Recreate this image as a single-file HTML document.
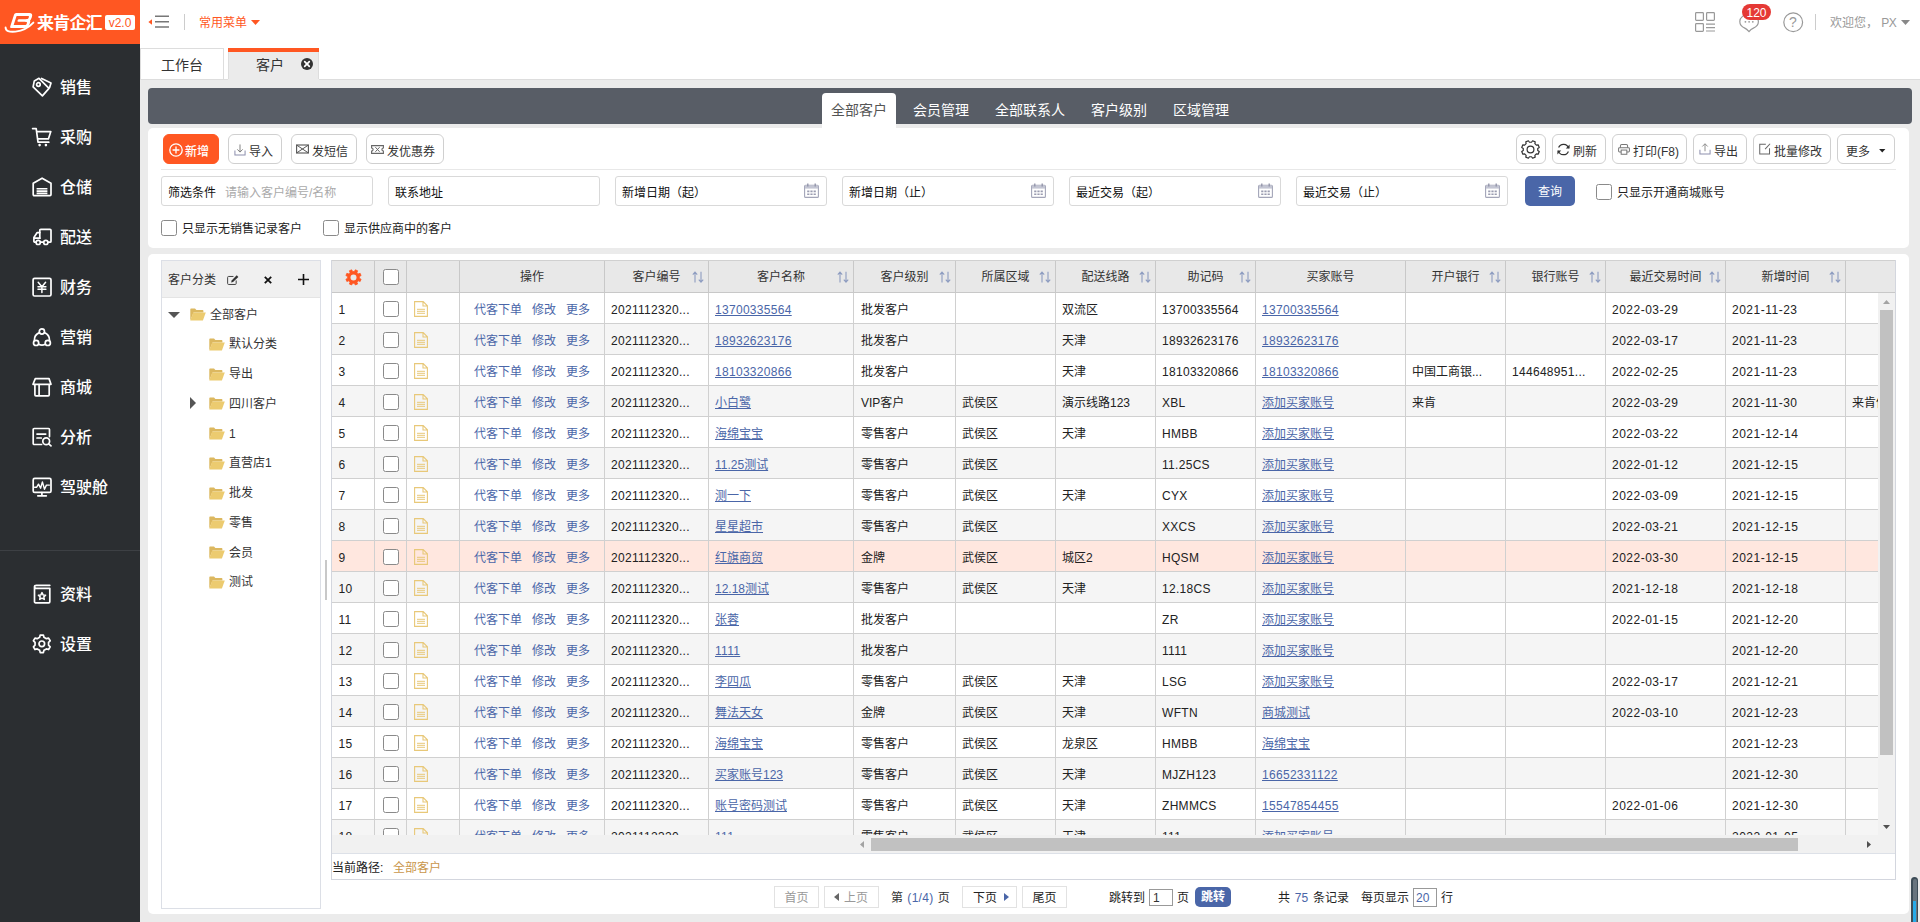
<!DOCTYPE html>
<html lang="zh-CN">
<head>
<meta charset="utf-8">
<title>客户</title>
<style>
*{box-sizing:border-box;margin:0;padding:0}
html,body{width:1920px;height:922px;overflow:hidden}
body{background:#ebebeb;font-family:"Liberation Sans","Noto Sans CJK SC",sans-serif;font-size:12px;color:#333;position:relative;line-height:1}
.abs{position:absolute}
svg{display:block;overflow:visible}
/* sidebar */
#side{position:absolute;left:0;top:0;width:140px;height:922px;background:#2b2e31}
#logo{position:absolute;left:0;top:0;width:140px;height:44px;background:#ff5722}
.mi{position:absolute;left:0;width:140px;height:50px;color:#fff;font-size:16px;font-weight:500}
.mi svg{position:absolute;left:32px;top:15px}
.mi span{position:absolute;left:60px;top:16px;line-height:20px;white-space:nowrap}
#sdiv{position:absolute;left:0;top:550px;width:140px;height:1px;background:#3d4044}
/* top */
#top{position:absolute;left:140px;top:0;width:1780px;height:80px;background:#fff}
#tabline{position:absolute;left:140px;top:79px;width:1780px;height:1px;background:#ddd}
.tab{position:absolute;font-size:14px;color:#333;line-height:20px;white-space:nowrap}
/* dark bar */
#dark{position:absolute;left:148px;top:88px;width:1764px;height:36px;background:#585d66;border-radius:4px}
.st{position:absolute;top:102px;font-size:14px;color:#fff;line-height:16px;white-space:nowrap}
/* panels */
.panel{position:absolute;background:#fff;border-radius:5px}
.btn{position:absolute;top:134px;height:30px;border:1px solid #d0d0d0;border-radius:6px;background:#fff;font-size:12px;color:#333;white-space:nowrap}
.btn span{position:absolute;top:10px;line-height:14px}
.btn svg{position:absolute}
.inp{position:absolute;top:176px;height:30px;border:1px solid #d9d9d9;border-radius:3px;background:#fff}
.inp span{position:absolute;left:6px;top:9px;line-height:14px;white-space:nowrap;color:#111}
.inp svg{position:absolute;right:7px;top:6px}
.cb{position:absolute;width:16px;height:16px;border:1px solid #8a8a8a;border-radius:2.5px;background:#fff}
.lbl{position:absolute;line-height:14px;white-space:nowrap;color:#222}
/* tree */
#tree{position:absolute;left:161px;top:260px;width:160px;height:649px;border:1px solid #dcdfe6;background:#fff}
#treeh{position:absolute;left:0;top:0;width:158px;height:37px;background:#f0f0f0;border-bottom:1px solid #e4e4e4}
.tn{position:absolute;line-height:14px;white-space:nowrap;color:#333}
.fd{position:absolute}
/* grid */
#grid{position:absolute;left:331px;top:260px;width:1565px;height:620px;border:1px solid #d3d6de;border-top:none;background:#fff;overflow:hidden}
#gh{position:absolute;left:0;top:0;width:1563px;height:33px;background:#e8e8e8;border-top:1px solid #d0d0d0;border-bottom:1px solid #c8c8c8}
.hc{position:absolute;top:0;height:31px;border-right:1px solid #c8c8c8;text-align:center;line-height:33px;color:#333;white-space:nowrap}
.hc i{position:absolute;right:5px;top:10px;width:12px;height:12px}
#gb{position:absolute;left:0;top:33px;width:1546px;height:542px;overflow:hidden}
.r{position:absolute;left:0;width:1563px;height:31px;border-bottom:1px solid #d0d0d0;background:#fff}
.r.e{background:#f5f5f5}
.r.s{background:#ffe7df}
.c{position:absolute;top:0;height:30px;border-right:1px solid #d0d0d0;line-height:35px;padding-left:7px;white-space:nowrap;overflow:hidden;color:#222}
.c a,.lk{color:#4a66a8;text-decoration:underline}
.op{color:#4a66a8}
.n{letter-spacing:.3px}
.d{letter-spacing:.5px}
.pg{position:absolute;top:886px;height:22px;border:1px solid #e2e2e2;background:#fff;line-height:22px;text-align:center;white-space:nowrap}
</style>
</head>
<body>
<div id="side">
<div id="logo">
<svg class="abs" style="left:4px;top:12px" width="32" height="22" viewBox="0 0 32 22"><g fill="none" stroke="#fff" stroke-linecap="round" stroke-linejoin="round"><g transform="skewX(-18)"><path d="M12.4,2.5 H25.6 a2.4,2.4 0 0 1 2.4,2.4 V6.1 a2.4,2.4 0 0 1 -2.4,2.4 a2.4,2.4 0 0 1 2.4,2.4 V12.1 a2.4,2.4 0 0 1 -2.4,2.4 H12.4 Z" stroke-width="3"/><path d="M17.5,8.5 H25.4" stroke-width="2.4"/></g><path d="M1.6,15.4 Q1.6,20.6 11.5,19.6 Q22,18.4 29.4,10.6" stroke-width="1.9"/></g></svg>
<span class="abs" style="left:37px;top:13px;font-size:17px;line-height:22px;font-weight:700;color:#fff;letter-spacing:-.8px;white-space:nowrap">来肯企汇</span>
<span class="abs" style="left:105px;top:15px;width:30px;height:15px;background:#fff;border-radius:2px;color:#ff5722;font-size:12px;line-height:16px;text-align:center">v2.0</span>
</div>
<div class="mi" style="top:62px"><svg width="20" height="20" viewBox="0 0 20 20"><g fill="none" stroke="#fff" stroke-width="1.7" stroke-linejoin="round" stroke-linecap="round"><path d="M2.3,3.9 L7,1.3 L17,11.4 L10.4,18.9 L1.1,9.9 Z"/><path d="M9.6,1.4 L19,6 L17.6,10.6"/><circle cx="6.4" cy="7.5" r="1.8"/></g></svg><span>销售</span></div>
<div class="mi" style="top:112px"><svg width="20" height="20" viewBox="0 0 20 20"><g fill="none" stroke="#fff" stroke-width="1.7" stroke-linejoin="round" stroke-linecap="round"><path d="M0.6,1.6 H4.2 L6,15.2 H16.8"/><path d="M5,4.6 H18.8 L16.4,11.9 H5.9"/></g><circle cx="7.6" cy="18.1" r="1.3" fill="#fff"/><circle cx="13.9" cy="18.1" r="1.3" fill="#fff"/></svg><span>采购</span></div>
<div class="mi" style="top:162px"><svg width="20" height="20" viewBox="0 0 20 20"><g fill="none" stroke="#fff" stroke-width="1.7" stroke-linejoin="round" stroke-linecap="round"><path d="M1.2,6.3 L10.1,1.2 L19,6.3 V17.6 a1,1 0 0 1 -1,1 H2.2 a1,1 0 0 1 -1,-1 Z"/></g><path d="M4.6,11h10.8v1.6H4.6z M4.6,13.3h10.8v1.6H4.6z M4.6,15.6h10.8v1.6H4.6z" fill="#fff"/></svg><span>仓储</span></div>
<div class="mi" style="top:212px"><svg width="20" height="20" viewBox="0 0 20 20"><g fill="none" stroke="#fff" stroke-width="1.7" stroke-linejoin="round" stroke-linecap="round"><path d="M7.8,11.2 V3.3 a1,1 0 0 1 1,-1 H18 a1,1 0 0 1 1,1 V14.2 a1,1 0 0 1 -1,1 H16.2"/><path d="M7.8,11.2 H1.9 M11.4,15.2 H8.6 M3.8,15.2 H2.9 a1,1 0 0 1 -1,-1 V10.4 L5.2,5.6 H7.8"/><circle cx="6.2" cy="15.4" r="2.1"/><circle cx="13.8" cy="15.4" r="2.1"/></g></svg><span>配送</span></div>
<div class="mi" style="top:262px"><svg width="20" height="20" viewBox="0 0 20 20"><g fill="none" stroke="#fff" stroke-width="1.7" stroke-linejoin="round" stroke-linecap="round"><rect x="1.1" y="1.3" width="17.9" height="17.7" rx="1.5"/><path d="M6.2,5.3 L9.9,9.8 L13.6,5.3 M6,9.8 H13.9 M6,12.2 H13.9 M9.9,9.8 V15.6" stroke-width="1.5"/></g></svg><span>财务</span></div>
<div class="mi" style="top:312px"><svg width="20" height="20" viewBox="0 0 20 20"><g fill="none" stroke="#fff" stroke-width="1.7" stroke-linejoin="round" stroke-linecap="round"><circle cx="9.9" cy="4.5" r="2.6"/><circle cx="4.1" cy="15.9" r="2.6"/><circle cx="15.8" cy="15.9" r="2.6"/><path d="M7.4,5.6 A8,8 0 0 0 2.4,13.3 M12.4,5.6 A8,8 0 0 1 17.5,13.3 M6.6,17.3 A8,8 0 0 0 13.3,17.3"/></g></svg><span>营销</span></div>
<div class="mi" style="top:362px"><svg width="20" height="20" viewBox="0 0 20 20"><g fill="none" stroke="#fff" stroke-width="1.7" stroke-linejoin="round" stroke-linecap="round"><path d="M3.3,1.6 H17 L19,7.3 H1 Z"/><path d="M2.9,7.6 V17.8 a1,1 0 0 0 1,1 H16.2 a1,1 0 0 0 1,-1 V7.6 M7.1,7.6 V18.6"/></g></svg><span>商城</span></div>
<div class="mi" style="top:412px"><svg width="20" height="20" viewBox="0 0 20 20"><g fill="none" stroke="#fff" stroke-width="1.7" stroke-linejoin="round" stroke-linecap="round"><path d="M9.6,17.5 H2.2 a1,1 0 0 1 -1,-1 V2.5 a1,1 0 0 1 1,-1 H16.5 a1,1 0 0 1 1,1 V9.6"/><path d="M5,7.1 H13.7 M5,11 H9.3"/><circle cx="14.2" cy="14.3" r="3.4"/><path d="M16.7,16.8 L19,18.9"/></g></svg><span>分析</span></div>
<div class="mi" style="top:462px"><svg width="20" height="20" viewBox="0 0 20 20"><g fill="none" stroke="#fff" stroke-width="1.7" stroke-linejoin="round" stroke-linecap="round"><rect x="1.2" y="1.4" width="17.8" height="14" rx="1.5"/><path d="M9.9,15.6 V18.6 M5.8,18.8 H14.3"/><path d="M2.6,10.2 H4.7 L6.5,7.2 L8.6,11.2 L10.4,4.9 L12.5,12.2 L14.4,8.1 H17.4" stroke-width="1.4"/></g></svg><span>驾驶舱</span></div>
<div class="mi" style="top:569px"><svg width="20" height="20" viewBox="0 0 20 20"><g fill="none" stroke="#fff" stroke-width="1.7" stroke-linejoin="round" stroke-linecap="round"><path d="M17.8,1.3 H4.4 a1.9,1.5 0 0 0 0,3 H17.8 V17.8 a1,1 0 0 1 -1,1 H3.5 a1,1 0 0 1 -1,-1 V2.8"/><path d="M10,8.6 L11.1,10.9 L13.6,11.2 L11.8,12.9 L12.3,15.4 L10,14.2 L7.7,15.4 L8.2,12.9 L6.4,11.2 L8.9,10.9 Z" stroke-width="1.5"/></g></svg><span>资料</span></div>
<div class="mi" style="top:619px"><svg width="20" height="20" viewBox="0 0 20 20"><g fill="none" stroke="#fff" stroke-width="1.7" stroke-linejoin="round" stroke-linecap="round"><path d="M11.93,16.36 L11.38,18.56 L8.22,18.56 L7.67,16.36 L5.18,14.93 L3.00,15.54 L1.43,12.81 L3.05,11.23 L3.05,8.37 L1.43,6.79 L3.00,4.06 L5.18,4.67 L7.67,3.24 L8.22,1.04 L11.38,1.04 L11.93,3.24 L14.42,4.67 L16.60,4.06 L18.17,6.79 L16.55,8.37 L16.55,11.23 L18.17,12.81 L16.60,15.54 L14.42,14.93Z"/><circle cx="9.8" cy="9.8" r="2.8"/></g></svg><span>设置</span></div>
<div id="sdiv"></div>
</div>
<div id="top">
<!-- collapse icon -->
<svg class="abs" style="left:8px;top:14px" width="22" height="16" viewBox="0 0 22 16"><path d="M0.4,8 L4,5.2 V10.8 Z" fill="#ff5722"/><path d="M7,2.3 H21 M7,7.7 H21 M7,13 H21" stroke="#777" stroke-width="1.6" fill="none"/></svg>
<div class="abs" style="left:44px;top:14px;width:1px;height:16px;background:#ccc"></div>
<span class="abs" style="left:59px;top:16px;line-height:14px;color:#ff5722;white-space:nowrap">常用菜单</span>
<svg class="abs" style="left:111px;top:20px" width="9" height="5" viewBox="0 0 9 5"><path d="M0,0 H9 L4.5,5 Z" fill="#ff5722"/></svg>
<!-- right icons -->
<svg class="abs" style="left:1555px;top:12px" width="21" height="21" viewBox="0 0 21 21"><g fill="none" stroke="#999" stroke-width="1.2"><rect x="0.6" y="0.6" width="7.8" height="7.8" rx="0.8"/><rect x="11.6" y="0.6" width="7.8" height="7.8" rx="0.8"/><rect x="0.6" y="11.6" width="7.8" height="7.8" rx="0.8"/><path d="M11,12.2 H20 M11,15.6 H20 M11,19 H20"/></g></svg>
<svg class="abs" style="left:1599px;top:13px" width="21" height="20" viewBox="0 0 21 20"><path d="M10.2,1.2 C4.8,1.2 0.8,4.6 0.8,8.6 C0.8,11.4 2.8,13.9 5.8,15.1 C7.2,15.7 8.6,17 10,18.6 C11.2,17 12.6,15.8 14.4,15.1 C17.4,13.9 19.4,11.4 19.4,8.6 C19.4,4.6 15.4,1.2 10.2,1.2 Z" fill="none" stroke="#999" stroke-width="1.2"/><circle cx="6.4" cy="8.8" r="0.9" fill="#999"/><circle cx="10.1" cy="8.8" r="0.9" fill="#999"/><circle cx="13.8" cy="8.8" r="0.9" fill="#999"/></svg>
<div class="abs" style="left:1602px;top:4px;width:29px;height:16px;border-radius:8px;background:#e53935;color:#fff;font-size:12px;line-height:18px;text-align:center">120</div>
<svg class="abs" style="left:1643px;top:12px" width="21" height="21" viewBox="0 0 21 21"><circle cx="10.2" cy="10.2" r="9.4" fill="none" stroke="#999" stroke-width="1.2"/></svg>
<span class="abs" style="left:1649px;top:14px;font-size:14px;line-height:16px;color:#999">?</span>
<div class="abs" style="left:1675px;top:14px;width:1px;height:16px;background:#ccc"></div>
<span class="abs" style="left:1690px;top:16px;line-height:14px;color:#999;white-space:nowrap">欢迎您，&nbsp;<span style="letter-spacing:-.7px">PX</span></span>
<svg class="abs" style="left:1761px;top:20px" width="9" height="5" viewBox="0 0 9 5"><path d="M0,0 H9 L4.5,5 Z" fill="#888"/></svg>
<!-- tabs -->
<div class="abs" style="left:0;top:48px;width:84px;height:31px;border:1px solid #ddd;border-bottom:none;background:#fff"></div>
<span class="tab" style="left:21px;top:55px">工作台</span>
<div class="abs" style="left:88px;top:48px;width:91px;height:32px;background:#ebebeb;border-right:1px solid #ddd;border-left:1px solid #ddd"></div>
<div class="abs" style="left:88px;top:48px;width:91px;height:4px;background:#ff5722"></div>
<span class="tab" style="left:116px;top:55px">客户</span>
<svg class="abs" style="left:161px;top:58px" width="12" height="12" viewBox="0 0 12 12"><circle cx="6" cy="6" r="6" fill="#333"/><path d="M3.7,3.7 L8.3,8.3 M8.3,3.7 L3.7,8.3" stroke="#fff" stroke-width="1.7" stroke-linecap="round"/></svg>
</div>
<div id="tabline"></div>
<div class="abs" style="left:228px;top:79px;width:91px;height:1px;background:#ebebeb"></div>
<!-- dark bar -->
<div id="dark"></div>
<div class="abs" style="left:822px;top:93px;width:74px;height:35px;background:#fff;border-radius:4px 4px 0 0"></div>
<span class="st" style="left:831px;color:#555">全部客户</span>
<span class="st" style="left:913px">会员管理</span>
<span class="st" style="left:995px">全部联系人</span>
<span class="st" style="left:1091px">客户级别</span>
<span class="st" style="left:1173px">区域管理</span>
<div class="panel" style="left:148px;top:128px;width:1761px;height:120px"></div>
<div class="btn" style="left:163px;width:56px;background:#ff5722;border-color:#ff5722"><svg style="left:4.5px;top:7.5px" width="14" height="14" viewBox="0 0 14 14"><circle cx="7" cy="7" r="6.2" fill="none" stroke="#fff" stroke-width="1.3"/><path d="M7,3.6 V10.4 M3.6,7 H10.4" stroke="#fff" stroke-width="1.3"/></svg><span style="left:21px;color:#fff;font-weight:500">新增</span></div>
<div class="btn" style="left:228px;width:54px"><svg style="left:4.5px;top:9px" width="12" height="12" viewBox="0 0 13 13"><path d="M1,7 V11.8 H12 V7" fill="none" stroke="#8d90ad" stroke-width="1.1"/><path d="M6.5,0.5 V8.6 M3.6,5.8 L6.5,8.8 L9.4,5.8" fill="none" stroke="#777" stroke-width="1"/></svg><span style="left:20px">导入</span></div>
<div class="btn" style="left:291px;width:66px"><svg style="left:4px;top:9px" width="13" height="10" viewBox="0 0 13 10"><rect x="0.6" y="1" width="11.8" height="8" fill="none" stroke="#555" stroke-width="1.1"/><path d="M0.8,1.2 L12.2,8.8 M12.2,1.2 L0.8,8.8" stroke="#555" stroke-width="1"/></svg><span style="left:20px">发短信</span></div>
<div class="btn" style="left:366px;width:78px"><svg style="left:4px;top:9.5px" width="13" height="9" viewBox="0 0 13 9"><path d="M0.6,0.6 H12.4 V3 a1.5,1.5 0 0 0 0,3 V8.4 H0.6 V6 a1.5,1.5 0 0 0 0,-3 Z" fill="none" stroke="#666" stroke-width="1.1"/><path d="M4.4,2.2 L8.6,6.8 M8.6,2.2 L4.4,6.8" stroke="#666" stroke-width="1"/></svg><span style="left:20px">发优惠券</span></div>
<div class="btn" style="left:1516px;width:30px"><svg style="left:4.3px;top:4.8px" width="19" height="19" viewBox="0 0 19 19"><path d="M16.73,10.53 L18.25,11.60 L17.17,14.20 L15.34,13.88 L13.88,15.34 L14.20,17.17 L11.60,18.25 L10.53,16.73 L8.47,16.73 L7.40,18.25 L4.80,17.17 L5.12,15.34 L3.66,13.88 L1.83,14.20 L0.75,11.60 L2.27,10.53 L2.27,8.47 L0.75,7.40 L1.83,4.80 L3.66,5.12 L5.12,3.66 L4.80,1.83 L7.40,0.75 L8.47,2.27 L10.53,2.27 L11.60,0.75 L14.20,1.83 L13.88,3.66 L15.34,5.12 L17.17,4.80 L18.25,7.40 L16.73,8.47Z" fill="none" stroke="#333" stroke-width="1.2" stroke-linejoin="round"/><circle cx="9.5" cy="9.5" r="3.4" fill="none" stroke="#333" stroke-width="1.2"/></svg></div>
<div class="btn" style="left:1552px;width:54px"><svg style="left:4px;top:8px" width="13" height="13" viewBox="0 0 13 13"><path d="M11.6,5.2 A5.3,5.3 0 0 0 1.6,4.6 M1.4,7.8 A5.3,5.3 0 0 0 11.4,8.4" fill="none" stroke="#333" stroke-width="1.2"/><path d="M12.6,1.6 V5.6 H8.8 Z M0.4,11.4 V7.4 H4.2 Z" fill="#333"/></svg><span style="left:20px">刷新</span></div>
<div class="btn" style="left:1612px;width:75px"><svg style="left:4.5px;top:9px" width="12" height="11" viewBox="0 0 13 12"><g fill="none" stroke="#777" stroke-width="1.1"><path d="M2.6,4 V2 a1.4,1.4 0 0 1 1.4,-1.4 H9 a1.4,1.4 0 0 1 1.4,1.4 V4"/><rect x="0.6" y="4" width="11.8" height="4.6" rx="1"/><rect x="3.4" y="6.6" width="6.2" height="4.6" fill="#fff"/></g></svg><span style="left:20px">打印(F8)</span></div>
<div class="btn" style="left:1693px;width:54px"><svg style="left:4.5px;top:8px" width="12" height="12" viewBox="0 0 13 13"><path d="M1,7.4 V12 H12 V7.4" fill="none" stroke="#8d90ad" stroke-width="1.1"/><path d="M6.5,9 V1 M3.6,3.8 L6.5,0.8 L9.4,3.8" fill="none" stroke="#888" stroke-width="1"/></svg><span style="left:20px">导出</span></div>
<div class="btn" style="left:1753px;width:78px"><svg style="left:4.5px;top:8px" width="12" height="12" viewBox="0 0 13 13"><path d="M7.4,1.4 H0.8 V12 H11.4 V5.6" fill="none" stroke="#666" stroke-width="1.1"/><path d="M12,0.8 L6.6,6.6" stroke="#666" stroke-width="1.1"/></svg><span style="left:20px">批量修改</span></div>
<div class="btn" style="left:1837px;width:58px"><span style="left:8px">更多</span><svg style="left:41px;top:13.5px" width="6.5" height="3.6" viewBox="0 0 7 4"><path d="M0,0 H7 L3.5,4 Z" fill="#222"/></svg></div>
<div class="abs" style="left:161px;top:169px;width:1735px;height:1px;background:#e8e8e8"></div>
<div class="inp" style="left:161px;width:212px"><span>筛选条件</span><span style="left:63px;color:#aaa">请输入客户编号/名称</span></div>
<div class="inp" style="left:388px;width:212px"><span>联系地址</span></div>
<div class="inp" style="left:615px;width:212px"><span>新增日期（起）</span><svg width="15" height="15" viewBox="0 0 15 15"><rect x="0.6" y="2.2" width="13.8" height="12.2" rx="1" fill="#fff" stroke="#a3a5b8" stroke-width="1.1"/><rect x="1" y="2.4" width="13" height="3.2" fill="#c3c5d3"/><path d="M3.8,0.6 V3.4 M11.2,0.6 V3.4" stroke="#8f91a6" stroke-width="1.3"/><path d="M3.2,8.4 H5.4 M6.4,8.4 H8.6 M9.6,8.4 H11.8 M3.2,11.2 H5.4 M6.4,11.2 H8.6 M9.6,11.2 H11.8" stroke="#9a9cb0" stroke-width="1.6"/></svg></div>
<div class="inp" style="left:842px;width:212px"><span>新增日期（止）</span><svg width="15" height="15" viewBox="0 0 15 15"><rect x="0.6" y="2.2" width="13.8" height="12.2" rx="1" fill="#fff" stroke="#a3a5b8" stroke-width="1.1"/><rect x="1" y="2.4" width="13" height="3.2" fill="#c3c5d3"/><path d="M3.8,0.6 V3.4 M11.2,0.6 V3.4" stroke="#8f91a6" stroke-width="1.3"/><path d="M3.2,8.4 H5.4 M6.4,8.4 H8.6 M9.6,8.4 H11.8 M3.2,11.2 H5.4 M6.4,11.2 H8.6 M9.6,11.2 H11.8" stroke="#9a9cb0" stroke-width="1.6"/></svg></div>
<div class="inp" style="left:1069px;width:212px"><span>最近交易（起）</span><svg width="15" height="15" viewBox="0 0 15 15"><rect x="0.6" y="2.2" width="13.8" height="12.2" rx="1" fill="#fff" stroke="#a3a5b8" stroke-width="1.1"/><rect x="1" y="2.4" width="13" height="3.2" fill="#c3c5d3"/><path d="M3.8,0.6 V3.4 M11.2,0.6 V3.4" stroke="#8f91a6" stroke-width="1.3"/><path d="M3.2,8.4 H5.4 M6.4,8.4 H8.6 M9.6,8.4 H11.8 M3.2,11.2 H5.4 M6.4,11.2 H8.6 M9.6,11.2 H11.8" stroke="#9a9cb0" stroke-width="1.6"/></svg></div>
<div class="inp" style="left:1296px;width:212px"><span>最近交易（止）</span><svg width="15" height="15" viewBox="0 0 15 15"><rect x="0.6" y="2.2" width="13.8" height="12.2" rx="1" fill="#fff" stroke="#a3a5b8" stroke-width="1.1"/><rect x="1" y="2.4" width="13" height="3.2" fill="#c3c5d3"/><path d="M3.8,0.6 V3.4 M11.2,0.6 V3.4" stroke="#8f91a6" stroke-width="1.3"/><path d="M3.2,8.4 H5.4 M6.4,8.4 H8.6 M9.6,8.4 H11.8 M3.2,11.2 H5.4 M6.4,11.2 H8.6 M9.6,11.2 H11.8" stroke="#9a9cb0" stroke-width="1.6"/></svg></div>
<div class="abs" style="left:1525px;top:176px;width:50px;height:30px;border-radius:5px;background:#4a66a8;color:#fff;text-align:center;line-height:32px">查询</div>
<div class="cb" style="left:1596px;top:184px"></div><span class="lbl" style="left:1617px;top:186px">只显示开通商城账号</span>
<div class="cb" style="left:161px;top:220px"></div><span class="lbl" style="left:182px;top:222px">只显示无销售记录客户</span>
<div class="cb" style="left:323px;top:220px"></div><span class="lbl" style="left:344px;top:222px">显示供应商中的客户</span>
<div class="panel" style="left:148px;top:254px;width:1761px;height:660px"></div>
<div id="tree"><div id="treeh"></div></div>
<span class="tn" style="left:168px;top:273px">客户分类</span>
<svg class="abs" style="left:227px;top:275px" width="12" height="10" viewBox="0 0 13 11"><path d="M7,1.6 H1.6 a1,1 0 0 0 -1,1 V9.4 a1,1 0 0 0 1,1 H9 a1,1 0 0 0 1,-1 V6" fill="none" stroke="#444" stroke-width="1.1"/><path d="M10.6,0.4 L12.4,2.2 L6.6,7.6 L4.4,8.2 L5,6 Z" fill="#333"/></svg>
<svg class="abs" style="left:264px;top:276px" width="8" height="8" viewBox="0 0 8 8"><path d="M0.8,0.8 L7.2,7.2 M7.2,0.8 L0.8,7.2" stroke="#111" stroke-width="1.8"/></svg>
<svg class="abs" style="left:298px;top:274px" width="11" height="11" viewBox="0 0 11 11"><path d="M5.5,0 V11 M0,5.5 H11" stroke="#111" stroke-width="1.6"/></svg>
<svg class="fd" style="left:190px;top:308.0px" width="16" height="13" viewBox="0 0 16 13"><path d="M0.3,12.4 V1.2 a0.8,0.8 0 0 1 0.8,-0.8 H5 L6.4,2 H12.6 a0.8,0.8 0 0 1 0.8,0.8 V4.4 H3.6 Z" fill="#dcb860"/><path d="M0.3,12.6 L3.2,4.6 H15.8 L12.9,12.6 Z" fill="#eccb70"/></svg>
<span class="tn" style="left:210px;top:307.5px">全部客户</span>
<svg class="fd" style="left:209px;top:337.8px" width="16" height="13" viewBox="0 0 16 13"><path d="M0.3,12.4 V1.2 a0.8,0.8 0 0 1 0.8,-0.8 H5 L6.4,2 H12.6 a0.8,0.8 0 0 1 0.8,0.8 V4.4 H3.6 Z" fill="#dcb860"/><path d="M0.3,12.6 L3.2,4.6 H15.8 L12.9,12.6 Z" fill="#eccb70"/></svg>
<span class="tn" style="left:229px;top:337.2px">默认分类</span>
<svg class="fd" style="left:209px;top:367.5px" width="16" height="13" viewBox="0 0 16 13"><path d="M0.3,12.4 V1.2 a0.8,0.8 0 0 1 0.8,-0.8 H5 L6.4,2 H12.6 a0.8,0.8 0 0 1 0.8,0.8 V4.4 H3.6 Z" fill="#dcb860"/><path d="M0.3,12.6 L3.2,4.6 H15.8 L12.9,12.6 Z" fill="#eccb70"/></svg>
<span class="tn" style="left:229px;top:367.0px">导出</span>
<svg class="fd" style="left:209px;top:397.2px" width="16" height="13" viewBox="0 0 16 13"><path d="M0.3,12.4 V1.2 a0.8,0.8 0 0 1 0.8,-0.8 H5 L6.4,2 H12.6 a0.8,0.8 0 0 1 0.8,0.8 V4.4 H3.6 Z" fill="#dcb860"/><path d="M0.3,12.6 L3.2,4.6 H15.8 L12.9,12.6 Z" fill="#eccb70"/></svg>
<span class="tn" style="left:229px;top:396.8px">四川客户</span>
<svg class="fd" style="left:209px;top:427.0px" width="16" height="13" viewBox="0 0 16 13"><path d="M0.3,12.4 V1.2 a0.8,0.8 0 0 1 0.8,-0.8 H5 L6.4,2 H12.6 a0.8,0.8 0 0 1 0.8,0.8 V4.4 H3.6 Z" fill="#dcb860"/><path d="M0.3,12.6 L3.2,4.6 H15.8 L12.9,12.6 Z" fill="#eccb70"/></svg>
<span class="tn" style="left:229px;top:426.5px">1</span>
<svg class="fd" style="left:209px;top:456.8px" width="16" height="13" viewBox="0 0 16 13"><path d="M0.3,12.4 V1.2 a0.8,0.8 0 0 1 0.8,-0.8 H5 L6.4,2 H12.6 a0.8,0.8 0 0 1 0.8,0.8 V4.4 H3.6 Z" fill="#dcb860"/><path d="M0.3,12.6 L3.2,4.6 H15.8 L12.9,12.6 Z" fill="#eccb70"/></svg>
<span class="tn" style="left:229px;top:456.2px">直营店1</span>
<svg class="fd" style="left:209px;top:486.5px" width="16" height="13" viewBox="0 0 16 13"><path d="M0.3,12.4 V1.2 a0.8,0.8 0 0 1 0.8,-0.8 H5 L6.4,2 H12.6 a0.8,0.8 0 0 1 0.8,0.8 V4.4 H3.6 Z" fill="#dcb860"/><path d="M0.3,12.6 L3.2,4.6 H15.8 L12.9,12.6 Z" fill="#eccb70"/></svg>
<span class="tn" style="left:229px;top:486.0px">批发</span>
<svg class="fd" style="left:209px;top:516.2px" width="16" height="13" viewBox="0 0 16 13"><path d="M0.3,12.4 V1.2 a0.8,0.8 0 0 1 0.8,-0.8 H5 L6.4,2 H12.6 a0.8,0.8 0 0 1 0.8,0.8 V4.4 H3.6 Z" fill="#dcb860"/><path d="M0.3,12.6 L3.2,4.6 H15.8 L12.9,12.6 Z" fill="#eccb70"/></svg>
<span class="tn" style="left:229px;top:515.8px">零售</span>
<svg class="fd" style="left:209px;top:546.0px" width="16" height="13" viewBox="0 0 16 13"><path d="M0.3,12.4 V1.2 a0.8,0.8 0 0 1 0.8,-0.8 H5 L6.4,2 H12.6 a0.8,0.8 0 0 1 0.8,0.8 V4.4 H3.6 Z" fill="#dcb860"/><path d="M0.3,12.6 L3.2,4.6 H15.8 L12.9,12.6 Z" fill="#eccb70"/></svg>
<span class="tn" style="left:229px;top:545.5px">会员</span>
<svg class="fd" style="left:209px;top:575.8px" width="16" height="13" viewBox="0 0 16 13"><path d="M0.3,12.4 V1.2 a0.8,0.8 0 0 1 0.8,-0.8 H5 L6.4,2 H12.6 a0.8,0.8 0 0 1 0.8,0.8 V4.4 H3.6 Z" fill="#dcb860"/><path d="M0.3,12.6 L3.2,4.6 H15.8 L12.9,12.6 Z" fill="#eccb70"/></svg>
<span class="tn" style="left:229px;top:575.2px">测试</span>
<svg class="abs" style="left:168px;top:312px" width="12" height="6" viewBox="0 0 12 6"><path d="M0,0 H12 L6,6 Z" fill="#555"/></svg>
<svg class="abs" style="left:190px;top:397px" width="6" height="12" viewBox="0 0 6 12"><path d="M0,0 L6,6 L0,12 Z" fill="#555"/></svg>
<div class="abs" style="left:325px;top:560px;width:2px;height:40px;background:#c8c8c8"></div>
<div id="grid"><div id="gh">
<div class="hc" style="left:0px;width:43px;"></div>
<div class="hc" style="left:43px;width:32px;"></div>
<div class="hc" style="left:75px;width:53px;"></div>
<div class="hc" style="left:128px;width:145px;">操作</div>
<div class="hc" style="left:273px;width:104px;">客户编号<svg class="abs" style="right:4px;top:10px" width="12" height="12" viewBox="0 0 12 12"><path d="M3,11.4 V1.2 M0.8,3.6 L3,1 L5.2,3.6 M9,0.8 V11 M6.8,8.6 L9,11.2 L11.2,8.6" fill="none" stroke="#8d9cc0" stroke-width="1.1"/></svg></div>
<div class="hc" style="left:377px;width:145px;">客户名称<svg class="abs" style="right:4px;top:10px" width="12" height="12" viewBox="0 0 12 12"><path d="M3,11.4 V1.2 M0.8,3.6 L3,1 L5.2,3.6 M9,0.8 V11 M6.8,8.6 L9,11.2 L11.2,8.6" fill="none" stroke="#8d9cc0" stroke-width="1.1"/></svg></div>
<div class="hc" style="left:522px;width:102px;">客户级别<svg class="abs" style="right:4px;top:10px" width="12" height="12" viewBox="0 0 12 12"><path d="M3,11.4 V1.2 M0.8,3.6 L3,1 L5.2,3.6 M9,0.8 V11 M6.8,8.6 L9,11.2 L11.2,8.6" fill="none" stroke="#8d9cc0" stroke-width="1.1"/></svg></div>
<div class="hc" style="left:624px;width:100px;">所属区域<svg class="abs" style="right:4px;top:10px" width="12" height="12" viewBox="0 0 12 12"><path d="M3,11.4 V1.2 M0.8,3.6 L3,1 L5.2,3.6 M9,0.8 V11 M6.8,8.6 L9,11.2 L11.2,8.6" fill="none" stroke="#8d9cc0" stroke-width="1.1"/></svg></div>
<div class="hc" style="left:724px;width:100px;">配送线路<svg class="abs" style="right:4px;top:10px" width="12" height="12" viewBox="0 0 12 12"><path d="M3,11.4 V1.2 M0.8,3.6 L3,1 L5.2,3.6 M9,0.8 V11 M6.8,8.6 L9,11.2 L11.2,8.6" fill="none" stroke="#8d9cc0" stroke-width="1.1"/></svg></div>
<div class="hc" style="left:824px;width:100px;">助记码<svg class="abs" style="right:4px;top:10px" width="12" height="12" viewBox="0 0 12 12"><path d="M3,11.4 V1.2 M0.8,3.6 L3,1 L5.2,3.6 M9,0.8 V11 M6.8,8.6 L9,11.2 L11.2,8.6" fill="none" stroke="#8d9cc0" stroke-width="1.1"/></svg></div>
<div class="hc" style="left:924px;width:150px;">买家账号</div>
<div class="hc" style="left:1074px;width:100px;">开户银行<svg class="abs" style="right:4px;top:10px" width="12" height="12" viewBox="0 0 12 12"><path d="M3,11.4 V1.2 M0.8,3.6 L3,1 L5.2,3.6 M9,0.8 V11 M6.8,8.6 L9,11.2 L11.2,8.6" fill="none" stroke="#8d9cc0" stroke-width="1.1"/></svg></div>
<div class="hc" style="left:1174px;width:100px;">银行账号<svg class="abs" style="right:4px;top:10px" width="12" height="12" viewBox="0 0 12 12"><path d="M3,11.4 V1.2 M0.8,3.6 L3,1 L5.2,3.6 M9,0.8 V11 M6.8,8.6 L9,11.2 L11.2,8.6" fill="none" stroke="#8d9cc0" stroke-width="1.1"/></svg></div>
<div class="hc" style="left:1274px;width:120px;">最近交易时间<svg class="abs" style="right:4px;top:10px" width="12" height="12" viewBox="0 0 12 12"><path d="M3,11.4 V1.2 M0.8,3.6 L3,1 L5.2,3.6 M9,0.8 V11 M6.8,8.6 L9,11.2 L11.2,8.6" fill="none" stroke="#8d9cc0" stroke-width="1.1"/></svg></div>
<div class="hc" style="left:1394px;width:120px;">新增时间<svg class="abs" style="right:4px;top:10px" width="12" height="12" viewBox="0 0 12 12"><path d="M3,11.4 V1.2 M0.8,3.6 L3,1 L5.2,3.6 M9,0.8 V11 M6.8,8.6 L9,11.2 L11.2,8.6" fill="none" stroke="#8d9cc0" stroke-width="1.1"/></svg></div>
<div class="hc" style="left:1514px;width:49px;border-right:none;"></div>
<svg class="abs" style="left:13px;top:8px" width="16" height="16" viewBox="0 0 16 16"><path d="M14.33,9.32 L16.08,10.22 L15.15,12.48 L13.27,11.87 L11.97,13.17 L12.58,15.05 L10.32,15.98 L9.42,14.23 L7.58,14.23 L6.68,15.98 L4.42,15.05 L5.03,13.17 L3.73,11.87 L1.85,12.48 L0.92,10.22 L2.67,9.32 L2.67,7.48 L0.92,6.58 L1.85,4.32 L3.73,4.93 L5.03,3.63 L4.42,1.75 L6.68,0.82 L7.58,2.57 L9.42,2.57 L10.32,0.82 L12.58,1.75 L11.97,3.63 L13.27,4.93 L15.15,4.32 L16.08,6.58 L14.33,7.48Z" fill="#ff5722" stroke="#ff5722" stroke-width="0.8" stroke-linejoin="round"/><circle cx="8.5" cy="8.4" r="3" fill="#e8e8e8"/></svg>
<div class="cb" style="left:51px;top:8px"></div>
</div><div id="gb">
<div class="r" style="top:0px">
<div class="c" style="left:0px;width:43px;padding-left:6.5px;"><span class="n">1</span></div>
<div class="c" style="left:43px;width:32px;"><i class="cb" style="left:8px;top:8px"></i></div>
<div class="c" style="left:75px;width:53px;"><svg class="abs" style="left:7px;top:8px" width="14" height="16" viewBox="0 0 14 16"><path d="M0.6,0.6 H9.2 L13.4,4.8 V15.4 H0.6 Z M9,0.8 V5 H13.2" fill="none" stroke="#e8c878" stroke-width="1.1"/><path d="M3,8.3 H11 M3,10.3 H11 M3,12.3 H11" stroke="#e8c878" stroke-width="1"/></svg></div>
<div class="c" style="left:128px;width:145px;"><span class="op" style="position:absolute;left:14px">代客下单</span><span class="op" style="position:absolute;left:72px">修改</span><span class="op" style="position:absolute;left:106px">更多</span></div>
<div class="c" style="left:273px;width:104px;padding-left:6px;"><span class="n">2021112320...</span></div>
<div class="c" style="left:377px;width:145px;padding-left:6px;"><a class="n">13700335564</a></div>
<div class="c" style="left:522px;width:102px;">批发客户</div>
<div class="c" style="left:624px;width:100px;padding-left:6px;"></div>
<div class="c" style="left:724px;width:100px;padding-left:6px;">双流区</div>
<div class="c" style="left:824px;width:100px;padding-left:6px;"><span class="n">13700335564</span></div>
<div class="c" style="left:924px;width:150px;padding-left:6px;"><a class="n">13700335564</a></div>
<div class="c" style="left:1074px;width:100px;padding-left:6px;"></div>
<div class="c" style="left:1174px;width:100px;padding-left:6px;"><span class="n"></span></div>
<div class="c" style="left:1274px;width:120px;padding-left:6px;"><span class="d">2022-03-29</span></div>
<div class="c" style="left:1394px;width:120px;padding-left:6px;"><span class="d">2021-11-23</span></div>
<div class="c" style="left:1514px;width:49px;border-right:none;padding-left:6px;"></div>
</div>
<div class="r e" style="top:31px">
<div class="c" style="left:0px;width:43px;padding-left:6.5px;"><span class="n">2</span></div>
<div class="c" style="left:43px;width:32px;"><i class="cb" style="left:8px;top:8px"></i></div>
<div class="c" style="left:75px;width:53px;"><svg class="abs" style="left:7px;top:8px" width="14" height="16" viewBox="0 0 14 16"><path d="M0.6,0.6 H9.2 L13.4,4.8 V15.4 H0.6 Z M9,0.8 V5 H13.2" fill="none" stroke="#e8c878" stroke-width="1.1"/><path d="M3,8.3 H11 M3,10.3 H11 M3,12.3 H11" stroke="#e8c878" stroke-width="1"/></svg></div>
<div class="c" style="left:128px;width:145px;"><span class="op" style="position:absolute;left:14px">代客下单</span><span class="op" style="position:absolute;left:72px">修改</span><span class="op" style="position:absolute;left:106px">更多</span></div>
<div class="c" style="left:273px;width:104px;padding-left:6px;"><span class="n">2021112320...</span></div>
<div class="c" style="left:377px;width:145px;padding-left:6px;"><a class="n">18932623176</a></div>
<div class="c" style="left:522px;width:102px;">批发客户</div>
<div class="c" style="left:624px;width:100px;padding-left:6px;"></div>
<div class="c" style="left:724px;width:100px;padding-left:6px;">天津</div>
<div class="c" style="left:824px;width:100px;padding-left:6px;"><span class="n">18932623176</span></div>
<div class="c" style="left:924px;width:150px;padding-left:6px;"><a class="n">18932623176</a></div>
<div class="c" style="left:1074px;width:100px;padding-left:6px;"></div>
<div class="c" style="left:1174px;width:100px;padding-left:6px;"><span class="n"></span></div>
<div class="c" style="left:1274px;width:120px;padding-left:6px;"><span class="d">2022-03-17</span></div>
<div class="c" style="left:1394px;width:120px;padding-left:6px;"><span class="d">2021-11-23</span></div>
<div class="c" style="left:1514px;width:49px;border-right:none;padding-left:6px;"></div>
</div>
<div class="r" style="top:62px">
<div class="c" style="left:0px;width:43px;padding-left:6.5px;"><span class="n">3</span></div>
<div class="c" style="left:43px;width:32px;"><i class="cb" style="left:8px;top:8px"></i></div>
<div class="c" style="left:75px;width:53px;"><svg class="abs" style="left:7px;top:8px" width="14" height="16" viewBox="0 0 14 16"><path d="M0.6,0.6 H9.2 L13.4,4.8 V15.4 H0.6 Z M9,0.8 V5 H13.2" fill="none" stroke="#e8c878" stroke-width="1.1"/><path d="M3,8.3 H11 M3,10.3 H11 M3,12.3 H11" stroke="#e8c878" stroke-width="1"/></svg></div>
<div class="c" style="left:128px;width:145px;"><span class="op" style="position:absolute;left:14px">代客下单</span><span class="op" style="position:absolute;left:72px">修改</span><span class="op" style="position:absolute;left:106px">更多</span></div>
<div class="c" style="left:273px;width:104px;padding-left:6px;"><span class="n">2021112320...</span></div>
<div class="c" style="left:377px;width:145px;padding-left:6px;"><a class="n">18103320866</a></div>
<div class="c" style="left:522px;width:102px;">批发客户</div>
<div class="c" style="left:624px;width:100px;padding-left:6px;"></div>
<div class="c" style="left:724px;width:100px;padding-left:6px;">天津</div>
<div class="c" style="left:824px;width:100px;padding-left:6px;"><span class="n">18103320866</span></div>
<div class="c" style="left:924px;width:150px;padding-left:6px;"><a class="n">18103320866</a></div>
<div class="c" style="left:1074px;width:100px;padding-left:6px;">中国工商银...</div>
<div class="c" style="left:1174px;width:100px;padding-left:6px;"><span class="n">144648951...</span></div>
<div class="c" style="left:1274px;width:120px;padding-left:6px;"><span class="d">2022-02-25</span></div>
<div class="c" style="left:1394px;width:120px;padding-left:6px;"><span class="d">2021-11-23</span></div>
<div class="c" style="left:1514px;width:49px;border-right:none;padding-left:6px;"></div>
</div>
<div class="r e" style="top:93px">
<div class="c" style="left:0px;width:43px;padding-left:6.5px;"><span class="n">4</span></div>
<div class="c" style="left:43px;width:32px;"><i class="cb" style="left:8px;top:8px"></i></div>
<div class="c" style="left:75px;width:53px;"><svg class="abs" style="left:7px;top:8px" width="14" height="16" viewBox="0 0 14 16"><path d="M0.6,0.6 H9.2 L13.4,4.8 V15.4 H0.6 Z M9,0.8 V5 H13.2" fill="none" stroke="#e8c878" stroke-width="1.1"/><path d="M3,8.3 H11 M3,10.3 H11 M3,12.3 H11" stroke="#e8c878" stroke-width="1"/></svg></div>
<div class="c" style="left:128px;width:145px;"><span class="op" style="position:absolute;left:14px">代客下单</span><span class="op" style="position:absolute;left:72px">修改</span><span class="op" style="position:absolute;left:106px">更多</span></div>
<div class="c" style="left:273px;width:104px;padding-left:6px;"><span class="n">2021112320...</span></div>
<div class="c" style="left:377px;width:145px;padding-left:6px;"><a>小白鹭</a></div>
<div class="c" style="left:522px;width:102px;">VIP客户</div>
<div class="c" style="left:624px;width:100px;padding-left:6px;">武侯区</div>
<div class="c" style="left:724px;width:100px;padding-left:6px;">演示线路123</div>
<div class="c" style="left:824px;width:100px;padding-left:6px;"><span class="n">XBL</span></div>
<div class="c" style="left:924px;width:150px;padding-left:6px;"><a>添加买家账号</a></div>
<div class="c" style="left:1074px;width:100px;padding-left:6px;">来肯</div>
<div class="c" style="left:1174px;width:100px;padding-left:6px;"><span class="n"></span></div>
<div class="c" style="left:1274px;width:120px;padding-left:6px;"><span class="d">2022-03-29</span></div>
<div class="c" style="left:1394px;width:120px;padding-left:6px;"><span class="d">2021-11-30</span></div>
<div class="c" style="left:1514px;width:49px;border-right:none;padding-left:6px;">来肯信</div>
</div>
<div class="r" style="top:124px">
<div class="c" style="left:0px;width:43px;padding-left:6.5px;"><span class="n">5</span></div>
<div class="c" style="left:43px;width:32px;"><i class="cb" style="left:8px;top:8px"></i></div>
<div class="c" style="left:75px;width:53px;"><svg class="abs" style="left:7px;top:8px" width="14" height="16" viewBox="0 0 14 16"><path d="M0.6,0.6 H9.2 L13.4,4.8 V15.4 H0.6 Z M9,0.8 V5 H13.2" fill="none" stroke="#e8c878" stroke-width="1.1"/><path d="M3,8.3 H11 M3,10.3 H11 M3,12.3 H11" stroke="#e8c878" stroke-width="1"/></svg></div>
<div class="c" style="left:128px;width:145px;"><span class="op" style="position:absolute;left:14px">代客下单</span><span class="op" style="position:absolute;left:72px">修改</span><span class="op" style="position:absolute;left:106px">更多</span></div>
<div class="c" style="left:273px;width:104px;padding-left:6px;"><span class="n">2021112320...</span></div>
<div class="c" style="left:377px;width:145px;padding-left:6px;"><a>海绵宝宝</a></div>
<div class="c" style="left:522px;width:102px;">零售客户</div>
<div class="c" style="left:624px;width:100px;padding-left:6px;">武侯区</div>
<div class="c" style="left:724px;width:100px;padding-left:6px;">天津</div>
<div class="c" style="left:824px;width:100px;padding-left:6px;"><span class="n">HMBB</span></div>
<div class="c" style="left:924px;width:150px;padding-left:6px;"><a>添加买家账号</a></div>
<div class="c" style="left:1074px;width:100px;padding-left:6px;"></div>
<div class="c" style="left:1174px;width:100px;padding-left:6px;"><span class="n"></span></div>
<div class="c" style="left:1274px;width:120px;padding-left:6px;"><span class="d">2022-03-22</span></div>
<div class="c" style="left:1394px;width:120px;padding-left:6px;"><span class="d">2021-12-14</span></div>
<div class="c" style="left:1514px;width:49px;border-right:none;padding-left:6px;"></div>
</div>
<div class="r e" style="top:155px">
<div class="c" style="left:0px;width:43px;padding-left:6.5px;"><span class="n">6</span></div>
<div class="c" style="left:43px;width:32px;"><i class="cb" style="left:8px;top:8px"></i></div>
<div class="c" style="left:75px;width:53px;"><svg class="abs" style="left:7px;top:8px" width="14" height="16" viewBox="0 0 14 16"><path d="M0.6,0.6 H9.2 L13.4,4.8 V15.4 H0.6 Z M9,0.8 V5 H13.2" fill="none" stroke="#e8c878" stroke-width="1.1"/><path d="M3,8.3 H11 M3,10.3 H11 M3,12.3 H11" stroke="#e8c878" stroke-width="1"/></svg></div>
<div class="c" style="left:128px;width:145px;"><span class="op" style="position:absolute;left:14px">代客下单</span><span class="op" style="position:absolute;left:72px">修改</span><span class="op" style="position:absolute;left:106px">更多</span></div>
<div class="c" style="left:273px;width:104px;padding-left:6px;"><span class="n">2021112320...</span></div>
<div class="c" style="left:377px;width:145px;padding-left:6px;"><a>11.25测试</a></div>
<div class="c" style="left:522px;width:102px;">零售客户</div>
<div class="c" style="left:624px;width:100px;padding-left:6px;">武侯区</div>
<div class="c" style="left:724px;width:100px;padding-left:6px;"></div>
<div class="c" style="left:824px;width:100px;padding-left:6px;"><span class="n">11.25CS</span></div>
<div class="c" style="left:924px;width:150px;padding-left:6px;"><a>添加买家账号</a></div>
<div class="c" style="left:1074px;width:100px;padding-left:6px;"></div>
<div class="c" style="left:1174px;width:100px;padding-left:6px;"><span class="n"></span></div>
<div class="c" style="left:1274px;width:120px;padding-left:6px;"><span class="d">2022-01-12</span></div>
<div class="c" style="left:1394px;width:120px;padding-left:6px;"><span class="d">2021-12-15</span></div>
<div class="c" style="left:1514px;width:49px;border-right:none;padding-left:6px;"></div>
</div>
<div class="r" style="top:186px">
<div class="c" style="left:0px;width:43px;padding-left:6.5px;"><span class="n">7</span></div>
<div class="c" style="left:43px;width:32px;"><i class="cb" style="left:8px;top:8px"></i></div>
<div class="c" style="left:75px;width:53px;"><svg class="abs" style="left:7px;top:8px" width="14" height="16" viewBox="0 0 14 16"><path d="M0.6,0.6 H9.2 L13.4,4.8 V15.4 H0.6 Z M9,0.8 V5 H13.2" fill="none" stroke="#e8c878" stroke-width="1.1"/><path d="M3,8.3 H11 M3,10.3 H11 M3,12.3 H11" stroke="#e8c878" stroke-width="1"/></svg></div>
<div class="c" style="left:128px;width:145px;"><span class="op" style="position:absolute;left:14px">代客下单</span><span class="op" style="position:absolute;left:72px">修改</span><span class="op" style="position:absolute;left:106px">更多</span></div>
<div class="c" style="left:273px;width:104px;padding-left:6px;"><span class="n">2021112320...</span></div>
<div class="c" style="left:377px;width:145px;padding-left:6px;"><a>测一下</a></div>
<div class="c" style="left:522px;width:102px;">零售客户</div>
<div class="c" style="left:624px;width:100px;padding-left:6px;">武侯区</div>
<div class="c" style="left:724px;width:100px;padding-left:6px;">天津</div>
<div class="c" style="left:824px;width:100px;padding-left:6px;"><span class="n">CYX</span></div>
<div class="c" style="left:924px;width:150px;padding-left:6px;"><a>添加买家账号</a></div>
<div class="c" style="left:1074px;width:100px;padding-left:6px;"></div>
<div class="c" style="left:1174px;width:100px;padding-left:6px;"><span class="n"></span></div>
<div class="c" style="left:1274px;width:120px;padding-left:6px;"><span class="d">2022-03-09</span></div>
<div class="c" style="left:1394px;width:120px;padding-left:6px;"><span class="d">2021-12-15</span></div>
<div class="c" style="left:1514px;width:49px;border-right:none;padding-left:6px;"></div>
</div>
<div class="r e" style="top:217px">
<div class="c" style="left:0px;width:43px;padding-left:6.5px;"><span class="n">8</span></div>
<div class="c" style="left:43px;width:32px;"><i class="cb" style="left:8px;top:8px"></i></div>
<div class="c" style="left:75px;width:53px;"><svg class="abs" style="left:7px;top:8px" width="14" height="16" viewBox="0 0 14 16"><path d="M0.6,0.6 H9.2 L13.4,4.8 V15.4 H0.6 Z M9,0.8 V5 H13.2" fill="none" stroke="#e8c878" stroke-width="1.1"/><path d="M3,8.3 H11 M3,10.3 H11 M3,12.3 H11" stroke="#e8c878" stroke-width="1"/></svg></div>
<div class="c" style="left:128px;width:145px;"><span class="op" style="position:absolute;left:14px">代客下单</span><span class="op" style="position:absolute;left:72px">修改</span><span class="op" style="position:absolute;left:106px">更多</span></div>
<div class="c" style="left:273px;width:104px;padding-left:6px;"><span class="n">2021112320...</span></div>
<div class="c" style="left:377px;width:145px;padding-left:6px;"><a>星星超市</a></div>
<div class="c" style="left:522px;width:102px;">零售客户</div>
<div class="c" style="left:624px;width:100px;padding-left:6px;">武侯区</div>
<div class="c" style="left:724px;width:100px;padding-left:6px;"></div>
<div class="c" style="left:824px;width:100px;padding-left:6px;"><span class="n">XXCS</span></div>
<div class="c" style="left:924px;width:150px;padding-left:6px;"><a>添加买家账号</a></div>
<div class="c" style="left:1074px;width:100px;padding-left:6px;"></div>
<div class="c" style="left:1174px;width:100px;padding-left:6px;"><span class="n"></span></div>
<div class="c" style="left:1274px;width:120px;padding-left:6px;"><span class="d">2022-03-21</span></div>
<div class="c" style="left:1394px;width:120px;padding-left:6px;"><span class="d">2021-12-15</span></div>
<div class="c" style="left:1514px;width:49px;border-right:none;padding-left:6px;"></div>
</div>
<div class="r s" style="top:248px">
<div class="c" style="left:0px;width:43px;padding-left:6.5px;"><span class="n">9</span></div>
<div class="c" style="left:43px;width:32px;"><i class="cb" style="left:8px;top:8px"></i></div>
<div class="c" style="left:75px;width:53px;"><svg class="abs" style="left:7px;top:8px" width="14" height="16" viewBox="0 0 14 16"><path d="M0.6,0.6 H9.2 L13.4,4.8 V15.4 H0.6 Z M9,0.8 V5 H13.2" fill="none" stroke="#e8c878" stroke-width="1.1"/><path d="M3,8.3 H11 M3,10.3 H11 M3,12.3 H11" stroke="#e8c878" stroke-width="1"/></svg></div>
<div class="c" style="left:128px;width:145px;"><span class="op" style="position:absolute;left:14px">代客下单</span><span class="op" style="position:absolute;left:72px">修改</span><span class="op" style="position:absolute;left:106px">更多</span></div>
<div class="c" style="left:273px;width:104px;padding-left:6px;"><span class="n">2021112320...</span></div>
<div class="c" style="left:377px;width:145px;padding-left:6px;"><a>红旗商贸</a></div>
<div class="c" style="left:522px;width:102px;">金牌</div>
<div class="c" style="left:624px;width:100px;padding-left:6px;">武侯区</div>
<div class="c" style="left:724px;width:100px;padding-left:6px;">城区2</div>
<div class="c" style="left:824px;width:100px;padding-left:6px;"><span class="n">HQSM</span></div>
<div class="c" style="left:924px;width:150px;padding-left:6px;"><a>添加买家账号</a></div>
<div class="c" style="left:1074px;width:100px;padding-left:6px;"></div>
<div class="c" style="left:1174px;width:100px;padding-left:6px;"><span class="n"></span></div>
<div class="c" style="left:1274px;width:120px;padding-left:6px;"><span class="d">2022-03-30</span></div>
<div class="c" style="left:1394px;width:120px;padding-left:6px;"><span class="d">2021-12-15</span></div>
<div class="c" style="left:1514px;width:49px;border-right:none;padding-left:6px;"></div>
</div>
<div class="r e" style="top:279px">
<div class="c" style="left:0px;width:43px;padding-left:6.5px;"><span class="n">10</span></div>
<div class="c" style="left:43px;width:32px;"><i class="cb" style="left:8px;top:8px"></i></div>
<div class="c" style="left:75px;width:53px;"><svg class="abs" style="left:7px;top:8px" width="14" height="16" viewBox="0 0 14 16"><path d="M0.6,0.6 H9.2 L13.4,4.8 V15.4 H0.6 Z M9,0.8 V5 H13.2" fill="none" stroke="#e8c878" stroke-width="1.1"/><path d="M3,8.3 H11 M3,10.3 H11 M3,12.3 H11" stroke="#e8c878" stroke-width="1"/></svg></div>
<div class="c" style="left:128px;width:145px;"><span class="op" style="position:absolute;left:14px">代客下单</span><span class="op" style="position:absolute;left:72px">修改</span><span class="op" style="position:absolute;left:106px">更多</span></div>
<div class="c" style="left:273px;width:104px;padding-left:6px;"><span class="n">2021112320...</span></div>
<div class="c" style="left:377px;width:145px;padding-left:6px;"><a>12.18测试</a></div>
<div class="c" style="left:522px;width:102px;">零售客户</div>
<div class="c" style="left:624px;width:100px;padding-left:6px;">武侯区</div>
<div class="c" style="left:724px;width:100px;padding-left:6px;">天津</div>
<div class="c" style="left:824px;width:100px;padding-left:6px;"><span class="n">12.18CS</span></div>
<div class="c" style="left:924px;width:150px;padding-left:6px;"><a>添加买家账号</a></div>
<div class="c" style="left:1074px;width:100px;padding-left:6px;"></div>
<div class="c" style="left:1174px;width:100px;padding-left:6px;"><span class="n"></span></div>
<div class="c" style="left:1274px;width:120px;padding-left:6px;"><span class="d">2021-12-18</span></div>
<div class="c" style="left:1394px;width:120px;padding-left:6px;"><span class="d">2021-12-18</span></div>
<div class="c" style="left:1514px;width:49px;border-right:none;padding-left:6px;"></div>
</div>
<div class="r" style="top:310px">
<div class="c" style="left:0px;width:43px;padding-left:6.5px;"><span class="n">11</span></div>
<div class="c" style="left:43px;width:32px;"><i class="cb" style="left:8px;top:8px"></i></div>
<div class="c" style="left:75px;width:53px;"><svg class="abs" style="left:7px;top:8px" width="14" height="16" viewBox="0 0 14 16"><path d="M0.6,0.6 H9.2 L13.4,4.8 V15.4 H0.6 Z M9,0.8 V5 H13.2" fill="none" stroke="#e8c878" stroke-width="1.1"/><path d="M3,8.3 H11 M3,10.3 H11 M3,12.3 H11" stroke="#e8c878" stroke-width="1"/></svg></div>
<div class="c" style="left:128px;width:145px;"><span class="op" style="position:absolute;left:14px">代客下单</span><span class="op" style="position:absolute;left:72px">修改</span><span class="op" style="position:absolute;left:106px">更多</span></div>
<div class="c" style="left:273px;width:104px;padding-left:6px;"><span class="n">2021112320...</span></div>
<div class="c" style="left:377px;width:145px;padding-left:6px;"><a>张蓉</a></div>
<div class="c" style="left:522px;width:102px;">批发客户</div>
<div class="c" style="left:624px;width:100px;padding-left:6px;"></div>
<div class="c" style="left:724px;width:100px;padding-left:6px;"></div>
<div class="c" style="left:824px;width:100px;padding-left:6px;"><span class="n">ZR</span></div>
<div class="c" style="left:924px;width:150px;padding-left:6px;"><a>添加买家账号</a></div>
<div class="c" style="left:1074px;width:100px;padding-left:6px;"></div>
<div class="c" style="left:1174px;width:100px;padding-left:6px;"><span class="n"></span></div>
<div class="c" style="left:1274px;width:120px;padding-left:6px;"><span class="d">2022-01-15</span></div>
<div class="c" style="left:1394px;width:120px;padding-left:6px;"><span class="d">2021-12-20</span></div>
<div class="c" style="left:1514px;width:49px;border-right:none;padding-left:6px;"></div>
</div>
<div class="r e" style="top:341px">
<div class="c" style="left:0px;width:43px;padding-left:6.5px;"><span class="n">12</span></div>
<div class="c" style="left:43px;width:32px;"><i class="cb" style="left:8px;top:8px"></i></div>
<div class="c" style="left:75px;width:53px;"><svg class="abs" style="left:7px;top:8px" width="14" height="16" viewBox="0 0 14 16"><path d="M0.6,0.6 H9.2 L13.4,4.8 V15.4 H0.6 Z M9,0.8 V5 H13.2" fill="none" stroke="#e8c878" stroke-width="1.1"/><path d="M3,8.3 H11 M3,10.3 H11 M3,12.3 H11" stroke="#e8c878" stroke-width="1"/></svg></div>
<div class="c" style="left:128px;width:145px;"><span class="op" style="position:absolute;left:14px">代客下单</span><span class="op" style="position:absolute;left:72px">修改</span><span class="op" style="position:absolute;left:106px">更多</span></div>
<div class="c" style="left:273px;width:104px;padding-left:6px;"><span class="n">2021112320...</span></div>
<div class="c" style="left:377px;width:145px;padding-left:6px;"><a class="n">1111</a></div>
<div class="c" style="left:522px;width:102px;">批发客户</div>
<div class="c" style="left:624px;width:100px;padding-left:6px;"></div>
<div class="c" style="left:724px;width:100px;padding-left:6px;"></div>
<div class="c" style="left:824px;width:100px;padding-left:6px;"><span class="n">1111</span></div>
<div class="c" style="left:924px;width:150px;padding-left:6px;"><a>添加买家账号</a></div>
<div class="c" style="left:1074px;width:100px;padding-left:6px;"></div>
<div class="c" style="left:1174px;width:100px;padding-left:6px;"><span class="n"></span></div>
<div class="c" style="left:1274px;width:120px;padding-left:6px;"><span class="d"></span></div>
<div class="c" style="left:1394px;width:120px;padding-left:6px;"><span class="d">2021-12-20</span></div>
<div class="c" style="left:1514px;width:49px;border-right:none;padding-left:6px;"></div>
</div>
<div class="r" style="top:372px">
<div class="c" style="left:0px;width:43px;padding-left:6.5px;"><span class="n">13</span></div>
<div class="c" style="left:43px;width:32px;"><i class="cb" style="left:8px;top:8px"></i></div>
<div class="c" style="left:75px;width:53px;"><svg class="abs" style="left:7px;top:8px" width="14" height="16" viewBox="0 0 14 16"><path d="M0.6,0.6 H9.2 L13.4,4.8 V15.4 H0.6 Z M9,0.8 V5 H13.2" fill="none" stroke="#e8c878" stroke-width="1.1"/><path d="M3,8.3 H11 M3,10.3 H11 M3,12.3 H11" stroke="#e8c878" stroke-width="1"/></svg></div>
<div class="c" style="left:128px;width:145px;"><span class="op" style="position:absolute;left:14px">代客下单</span><span class="op" style="position:absolute;left:72px">修改</span><span class="op" style="position:absolute;left:106px">更多</span></div>
<div class="c" style="left:273px;width:104px;padding-left:6px;"><span class="n">2021112320...</span></div>
<div class="c" style="left:377px;width:145px;padding-left:6px;"><a>李四瓜</a></div>
<div class="c" style="left:522px;width:102px;">零售客户</div>
<div class="c" style="left:624px;width:100px;padding-left:6px;">武侯区</div>
<div class="c" style="left:724px;width:100px;padding-left:6px;">天津</div>
<div class="c" style="left:824px;width:100px;padding-left:6px;"><span class="n">LSG</span></div>
<div class="c" style="left:924px;width:150px;padding-left:6px;"><a>添加买家账号</a></div>
<div class="c" style="left:1074px;width:100px;padding-left:6px;"></div>
<div class="c" style="left:1174px;width:100px;padding-left:6px;"><span class="n"></span></div>
<div class="c" style="left:1274px;width:120px;padding-left:6px;"><span class="d">2022-03-17</span></div>
<div class="c" style="left:1394px;width:120px;padding-left:6px;"><span class="d">2021-12-21</span></div>
<div class="c" style="left:1514px;width:49px;border-right:none;padding-left:6px;"></div>
</div>
<div class="r e" style="top:403px">
<div class="c" style="left:0px;width:43px;padding-left:6.5px;"><span class="n">14</span></div>
<div class="c" style="left:43px;width:32px;"><i class="cb" style="left:8px;top:8px"></i></div>
<div class="c" style="left:75px;width:53px;"><svg class="abs" style="left:7px;top:8px" width="14" height="16" viewBox="0 0 14 16"><path d="M0.6,0.6 H9.2 L13.4,4.8 V15.4 H0.6 Z M9,0.8 V5 H13.2" fill="none" stroke="#e8c878" stroke-width="1.1"/><path d="M3,8.3 H11 M3,10.3 H11 M3,12.3 H11" stroke="#e8c878" stroke-width="1"/></svg></div>
<div class="c" style="left:128px;width:145px;"><span class="op" style="position:absolute;left:14px">代客下单</span><span class="op" style="position:absolute;left:72px">修改</span><span class="op" style="position:absolute;left:106px">更多</span></div>
<div class="c" style="left:273px;width:104px;padding-left:6px;"><span class="n">2021112320...</span></div>
<div class="c" style="left:377px;width:145px;padding-left:6px;"><a>舞法天女</a></div>
<div class="c" style="left:522px;width:102px;">金牌</div>
<div class="c" style="left:624px;width:100px;padding-left:6px;">武侯区</div>
<div class="c" style="left:724px;width:100px;padding-left:6px;">天津</div>
<div class="c" style="left:824px;width:100px;padding-left:6px;"><span class="n">WFTN</span></div>
<div class="c" style="left:924px;width:150px;padding-left:6px;"><a>商城测试</a></div>
<div class="c" style="left:1074px;width:100px;padding-left:6px;"></div>
<div class="c" style="left:1174px;width:100px;padding-left:6px;"><span class="n"></span></div>
<div class="c" style="left:1274px;width:120px;padding-left:6px;"><span class="d">2022-03-10</span></div>
<div class="c" style="left:1394px;width:120px;padding-left:6px;"><span class="d">2021-12-23</span></div>
<div class="c" style="left:1514px;width:49px;border-right:none;padding-left:6px;"></div>
</div>
<div class="r" style="top:434px">
<div class="c" style="left:0px;width:43px;padding-left:6.5px;"><span class="n">15</span></div>
<div class="c" style="left:43px;width:32px;"><i class="cb" style="left:8px;top:8px"></i></div>
<div class="c" style="left:75px;width:53px;"><svg class="abs" style="left:7px;top:8px" width="14" height="16" viewBox="0 0 14 16"><path d="M0.6,0.6 H9.2 L13.4,4.8 V15.4 H0.6 Z M9,0.8 V5 H13.2" fill="none" stroke="#e8c878" stroke-width="1.1"/><path d="M3,8.3 H11 M3,10.3 H11 M3,12.3 H11" stroke="#e8c878" stroke-width="1"/></svg></div>
<div class="c" style="left:128px;width:145px;"><span class="op" style="position:absolute;left:14px">代客下单</span><span class="op" style="position:absolute;left:72px">修改</span><span class="op" style="position:absolute;left:106px">更多</span></div>
<div class="c" style="left:273px;width:104px;padding-left:6px;"><span class="n">2021112320...</span></div>
<div class="c" style="left:377px;width:145px;padding-left:6px;"><a>海绵宝宝</a></div>
<div class="c" style="left:522px;width:102px;">零售客户</div>
<div class="c" style="left:624px;width:100px;padding-left:6px;">武侯区</div>
<div class="c" style="left:724px;width:100px;padding-left:6px;">龙泉区</div>
<div class="c" style="left:824px;width:100px;padding-left:6px;"><span class="n">HMBB</span></div>
<div class="c" style="left:924px;width:150px;padding-left:6px;"><a>海绵宝宝</a></div>
<div class="c" style="left:1074px;width:100px;padding-left:6px;"></div>
<div class="c" style="left:1174px;width:100px;padding-left:6px;"><span class="n"></span></div>
<div class="c" style="left:1274px;width:120px;padding-left:6px;"><span class="d"></span></div>
<div class="c" style="left:1394px;width:120px;padding-left:6px;"><span class="d">2021-12-23</span></div>
<div class="c" style="left:1514px;width:49px;border-right:none;padding-left:6px;"></div>
</div>
<div class="r e" style="top:465px">
<div class="c" style="left:0px;width:43px;padding-left:6.5px;"><span class="n">16</span></div>
<div class="c" style="left:43px;width:32px;"><i class="cb" style="left:8px;top:8px"></i></div>
<div class="c" style="left:75px;width:53px;"><svg class="abs" style="left:7px;top:8px" width="14" height="16" viewBox="0 0 14 16"><path d="M0.6,0.6 H9.2 L13.4,4.8 V15.4 H0.6 Z M9,0.8 V5 H13.2" fill="none" stroke="#e8c878" stroke-width="1.1"/><path d="M3,8.3 H11 M3,10.3 H11 M3,12.3 H11" stroke="#e8c878" stroke-width="1"/></svg></div>
<div class="c" style="left:128px;width:145px;"><span class="op" style="position:absolute;left:14px">代客下单</span><span class="op" style="position:absolute;left:72px">修改</span><span class="op" style="position:absolute;left:106px">更多</span></div>
<div class="c" style="left:273px;width:104px;padding-left:6px;"><span class="n">2021112320...</span></div>
<div class="c" style="left:377px;width:145px;padding-left:6px;"><a>买家账号123</a></div>
<div class="c" style="left:522px;width:102px;">零售客户</div>
<div class="c" style="left:624px;width:100px;padding-left:6px;">武侯区</div>
<div class="c" style="left:724px;width:100px;padding-left:6px;">天津</div>
<div class="c" style="left:824px;width:100px;padding-left:6px;"><span class="n">MJZH123</span></div>
<div class="c" style="left:924px;width:150px;padding-left:6px;"><a class="n">16652331122</a></div>
<div class="c" style="left:1074px;width:100px;padding-left:6px;"></div>
<div class="c" style="left:1174px;width:100px;padding-left:6px;"><span class="n"></span></div>
<div class="c" style="left:1274px;width:120px;padding-left:6px;"><span class="d"></span></div>
<div class="c" style="left:1394px;width:120px;padding-left:6px;"><span class="d">2021-12-30</span></div>
<div class="c" style="left:1514px;width:49px;border-right:none;padding-left:6px;"></div>
</div>
<div class="r" style="top:496px">
<div class="c" style="left:0px;width:43px;padding-left:6.5px;"><span class="n">17</span></div>
<div class="c" style="left:43px;width:32px;"><i class="cb" style="left:8px;top:8px"></i></div>
<div class="c" style="left:75px;width:53px;"><svg class="abs" style="left:7px;top:8px" width="14" height="16" viewBox="0 0 14 16"><path d="M0.6,0.6 H9.2 L13.4,4.8 V15.4 H0.6 Z M9,0.8 V5 H13.2" fill="none" stroke="#e8c878" stroke-width="1.1"/><path d="M3,8.3 H11 M3,10.3 H11 M3,12.3 H11" stroke="#e8c878" stroke-width="1"/></svg></div>
<div class="c" style="left:128px;width:145px;"><span class="op" style="position:absolute;left:14px">代客下单</span><span class="op" style="position:absolute;left:72px">修改</span><span class="op" style="position:absolute;left:106px">更多</span></div>
<div class="c" style="left:273px;width:104px;padding-left:6px;"><span class="n">2021112320...</span></div>
<div class="c" style="left:377px;width:145px;padding-left:6px;"><a>账号密码测试</a></div>
<div class="c" style="left:522px;width:102px;">零售客户</div>
<div class="c" style="left:624px;width:100px;padding-left:6px;">武侯区</div>
<div class="c" style="left:724px;width:100px;padding-left:6px;">天津</div>
<div class="c" style="left:824px;width:100px;padding-left:6px;"><span class="n">ZHMMCS</span></div>
<div class="c" style="left:924px;width:150px;padding-left:6px;"><a class="n">15547854455</a></div>
<div class="c" style="left:1074px;width:100px;padding-left:6px;"></div>
<div class="c" style="left:1174px;width:100px;padding-left:6px;"><span class="n"></span></div>
<div class="c" style="left:1274px;width:120px;padding-left:6px;"><span class="d">2022-01-06</span></div>
<div class="c" style="left:1394px;width:120px;padding-left:6px;"><span class="d">2021-12-30</span></div>
<div class="c" style="left:1514px;width:49px;border-right:none;padding-left:6px;"></div>
</div>
<div class="r e" style="top:527px">
<div class="c" style="left:0px;width:43px;padding-left:6.5px;"><span class="n">18</span></div>
<div class="c" style="left:43px;width:32px;"><i class="cb" style="left:8px;top:8px"></i></div>
<div class="c" style="left:75px;width:53px;"><svg class="abs" style="left:7px;top:8px" width="14" height="16" viewBox="0 0 14 16"><path d="M0.6,0.6 H9.2 L13.4,4.8 V15.4 H0.6 Z M9,0.8 V5 H13.2" fill="none" stroke="#e8c878" stroke-width="1.1"/><path d="M3,8.3 H11 M3,10.3 H11 M3,12.3 H11" stroke="#e8c878" stroke-width="1"/></svg></div>
<div class="c" style="left:128px;width:145px;"><span class="op" style="position:absolute;left:14px">代客下单</span><span class="op" style="position:absolute;left:72px">修改</span><span class="op" style="position:absolute;left:106px">更多</span></div>
<div class="c" style="left:273px;width:104px;padding-left:6px;"><span class="n">2021112320...</span></div>
<div class="c" style="left:377px;width:145px;padding-left:6px;"><a class="n">111</a></div>
<div class="c" style="left:522px;width:102px;">零售客户</div>
<div class="c" style="left:624px;width:100px;padding-left:6px;">武侯区</div>
<div class="c" style="left:724px;width:100px;padding-left:6px;">天津</div>
<div class="c" style="left:824px;width:100px;padding-left:6px;"><span class="n">111</span></div>
<div class="c" style="left:924px;width:150px;padding-left:6px;"><a>添加买家账号</a></div>
<div class="c" style="left:1074px;width:100px;padding-left:6px;"></div>
<div class="c" style="left:1174px;width:100px;padding-left:6px;"><span class="n"></span></div>
<div class="c" style="left:1274px;width:120px;padding-left:6px;"><span class="d"></span></div>
<div class="c" style="left:1394px;width:120px;padding-left:6px;"><span class="d">2022-01-05</span></div>
<div class="c" style="left:1514px;width:49px;border-right:none;padding-left:6px;"></div>
</div>
</div>
<div class="abs" style="left:1546px;top:33px;width:17px;height:542px;background:#f1f1f1"></div>
<svg class="abs" style="left:1551px;top:40px" width="7" height="4" viewBox="0 0 7 4"><path d="M0,4 H7 L3.5,0 Z" fill="#a3a3a3"/></svg>
<svg class="abs" style="left:1551px;top:565px" width="7" height="4" viewBox="0 0 7 4"><path d="M0,0 H7 L3.5,4 Z" fill="#505050"/></svg>
<div class="abs" style="left:1548px;top:50px;width:13px;height:445px;background:#c1c1c1"></div>
<div class="abs" style="left:0;top:575px;width:1563px;height:18px;background:#f1f1f1"></div>
<svg class="abs" style="left:528px;top:581px" width="4" height="7" viewBox="0 0 4 7"><path d="M4,0 V7 L0,3.5 Z" fill="#a3a3a3"/></svg>
<svg class="abs" style="left:1535px;top:581px" width="4" height="7" viewBox="0 0 4 7"><path d="M0,0 V7 L4,3.5 Z" fill="#505050"/></svg>
<div class="abs" style="left:539px;top:578px;width:927px;height:13px;background:#c1c1c1"></div>
<div class="abs" style="left:0;top:593px;width:1563px;height:1px;background:#dde1e8"></div>
<span class="abs" style="left:0;top:601px;line-height:14px;white-space:nowrap;color:#222">当前路径:</span><span class="abs" style="left:61px;top:601px;line-height:14px;white-space:nowrap;color:#c9964c">全部客户</span>
</div>
<div class="pg" style="left:774px;width:45px;color:#999">首页</div>
<div class="pg" style="left:824px;width:55px;color:#999;padding-left:9px">上页<svg class="abs" style="left:9px;top:6px" width="5" height="8" viewBox="0 0 5 8"><path d="M5,0 V8 L0,4 Z" fill="#666"/></svg></div>
<span class="lbl" style="left:891px;top:891px;color:#333;word-spacing:1px">第 <span style="color:#4a66a8;letter-spacing:.3px">(1/4)</span> 页</span>
<div class="pg" style="left:962px;width:55px;color:#222;padding-right:9px">下页<svg class="abs" style="left:41px;top:6px" width="5" height="8" viewBox="0 0 5 8"><path d="M0,0 V8 L5,4 Z" fill="#4a66a8"/></svg></div>
<div class="pg" style="left:1022px;width:45px;color:#222">尾页</div>
<span class="lbl" style="left:1109px;top:891px">跳转到</span>
<div class="abs" style="left:1149px;top:889px;width:24px;height:17px;border:1px solid #999;background:#fff;line-height:16px;padding-left:3px">1</div>
<span class="lbl" style="left:1177px;top:891px">页</span>
<div class="abs" style="left:1195px;top:887px;width:36px;height:20px;border-radius:5px;background:#4a66a8;color:#fff;text-align:center;line-height:21px;font-weight:700">跳转</div>
<span class="lbl" style="left:1278px;top:891px;word-spacing:1.5px">共 <span style="color:#4a66a8">75</span> 条记录</span>
<span class="lbl" style="left:1361px;top:891px">每页显示</span>
<div class="abs" style="left:1413px;top:888px;width:24px;height:19px;border:1px solid #999;background:#fff;line-height:18px;padding-left:2px;color:#4a66a8">20</div>
<span class="lbl" style="left:1441px;top:891px">行</span>
<div class="abs" style="left:1911px;top:877px;width:7px;height:50px;border-radius:3.5px;background:#3d4c57"></div><div class="abs" style="left:1912.5px;top:878.5px;width:4px;height:50px;border-radius:2px;background:#68747e"></div><div class="abs" style="left:1913.2px;top:901px;width:2.6px;height:27px;background:#27aae9"></div>
</body></html>
